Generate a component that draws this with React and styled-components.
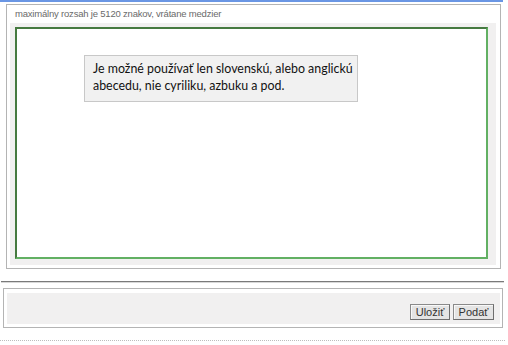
import styled, { createGlobalStyle } from "styled-components";

const GlobalStyle = createGlobalStyle`
  body {
    margin: 0;
    background: #fff;
    font-family: Arial, "Liberation Sans", sans-serif;
  }
`;

const Page = styled.div`
  width: 508px;
  height: 345px;
  display: flex;
  flex-direction: column;
`;

const TopBar = styled.div`
  width: 503px;
  height: 2px;
  background: #6a96e4;
`;

const EditorPanel = styled.section`
  margin: 2px 0 0 6px;
  width: 493px;
  height: 263px;
  border: 1px solid #b4b4b4;
  display: flex;
  flex-direction: column;
`;

const Hint = styled.div`
  font-family: "Liberation Sans", Arial, sans-serif;
  font-size: 9.5px;
  letter-spacing: -0.2px;
  color: #6a6a6a;
  padding: 2px 0 0 8px;
  height: 14px;
  line-height: 14px;
`;

const EditorBody = styled.div`
  margin: 2px 4px 3px 3px;
  flex: 1;
  background: #f1f0f0;
  padding: 4px 8px 6px 5px;
  display: flex;
`;

const TextArea = styled.div`
  position: relative;
  flex: 1;
  background: #fff;
  border: 2px solid;
  border-color: #467a40 #62b063 #62b063 #467a40;
`;

const Tooltip = styled.div`
  position: absolute;
  left: 67px;
  top: 26px;
  width: 262px;
  padding: 4px 2px 7px 8px;
  background: #f1f1f1;
  border: 1px solid #c8c8c8;
  font-family: Lato, "Noto Sans", sans-serif;
  font-size: 12.4px;
  line-height: 17px;
  color: #111;
`;

const Divider = styled.div`
  margin: 12px 0 0 1px;
  width: 503px;
  height: 2px;
  background: #7a7a7a;
  border-bottom: 1px solid #d8d8d8;
  box-sizing: border-box;
`;

const ActionPanel = styled.section`
  margin: 5px 0 0 3px;
  width: 493px;
  height: 31px;
  border: 1px solid #b4b4b4;
  padding: 4px 2px 3px 3px;
  display: flex;
`;

const ActionBody = styled.div`
  flex: 1;
  background: #f1f0f0;
  display: flex;
  justify-content: flex-end;
  align-items: flex-end;
  gap: 3px;
  padding: 0 6px 4px 0;
`;

const Button = styled.button`
  height: 16px;
  width: ${(p) => p.$w}px;
  padding: 0;
  background: #e4e4e4;
  border: 1px solid;
  border-color: #8a8a8a #6e6e6e #6e6e6e #8a8a8a;
  font-family: "Liberation Sans", Arial, sans-serif;
  font-size: 11px;
  line-height: 14px;
  color: #333;
  box-shadow: inset 1px 1px 0 #f8f8f8;
`;

const DottedLine = styled.div`
  margin: 12px 0 0 0;
  width: 505px;
  border-top: 1px dotted #bdbdbd;
`;

export default function App() {
  return (
    <Page>
      <GlobalStyle />
      <TopBar />
      <EditorPanel>
        <Hint>maximálny rozsah je 5120 znakov, vrátane medzier</Hint>
        <EditorBody>
          <TextArea>
            <Tooltip>
              Je možné používať len slovenskú, alebo anglickú abecedu, nie
              cyriliku, azbuku a pod.
            </Tooltip>
          </TextArea>
        </EditorBody>
      </EditorPanel>
      <Divider />
      <ActionPanel>
        <ActionBody>
          <Button $w={40}>Uložiť</Button>
          <Button $w={41}>Podať</Button>
        </ActionBody>
      </ActionPanel>
      <DottedLine />
    </Page>
  );
}
